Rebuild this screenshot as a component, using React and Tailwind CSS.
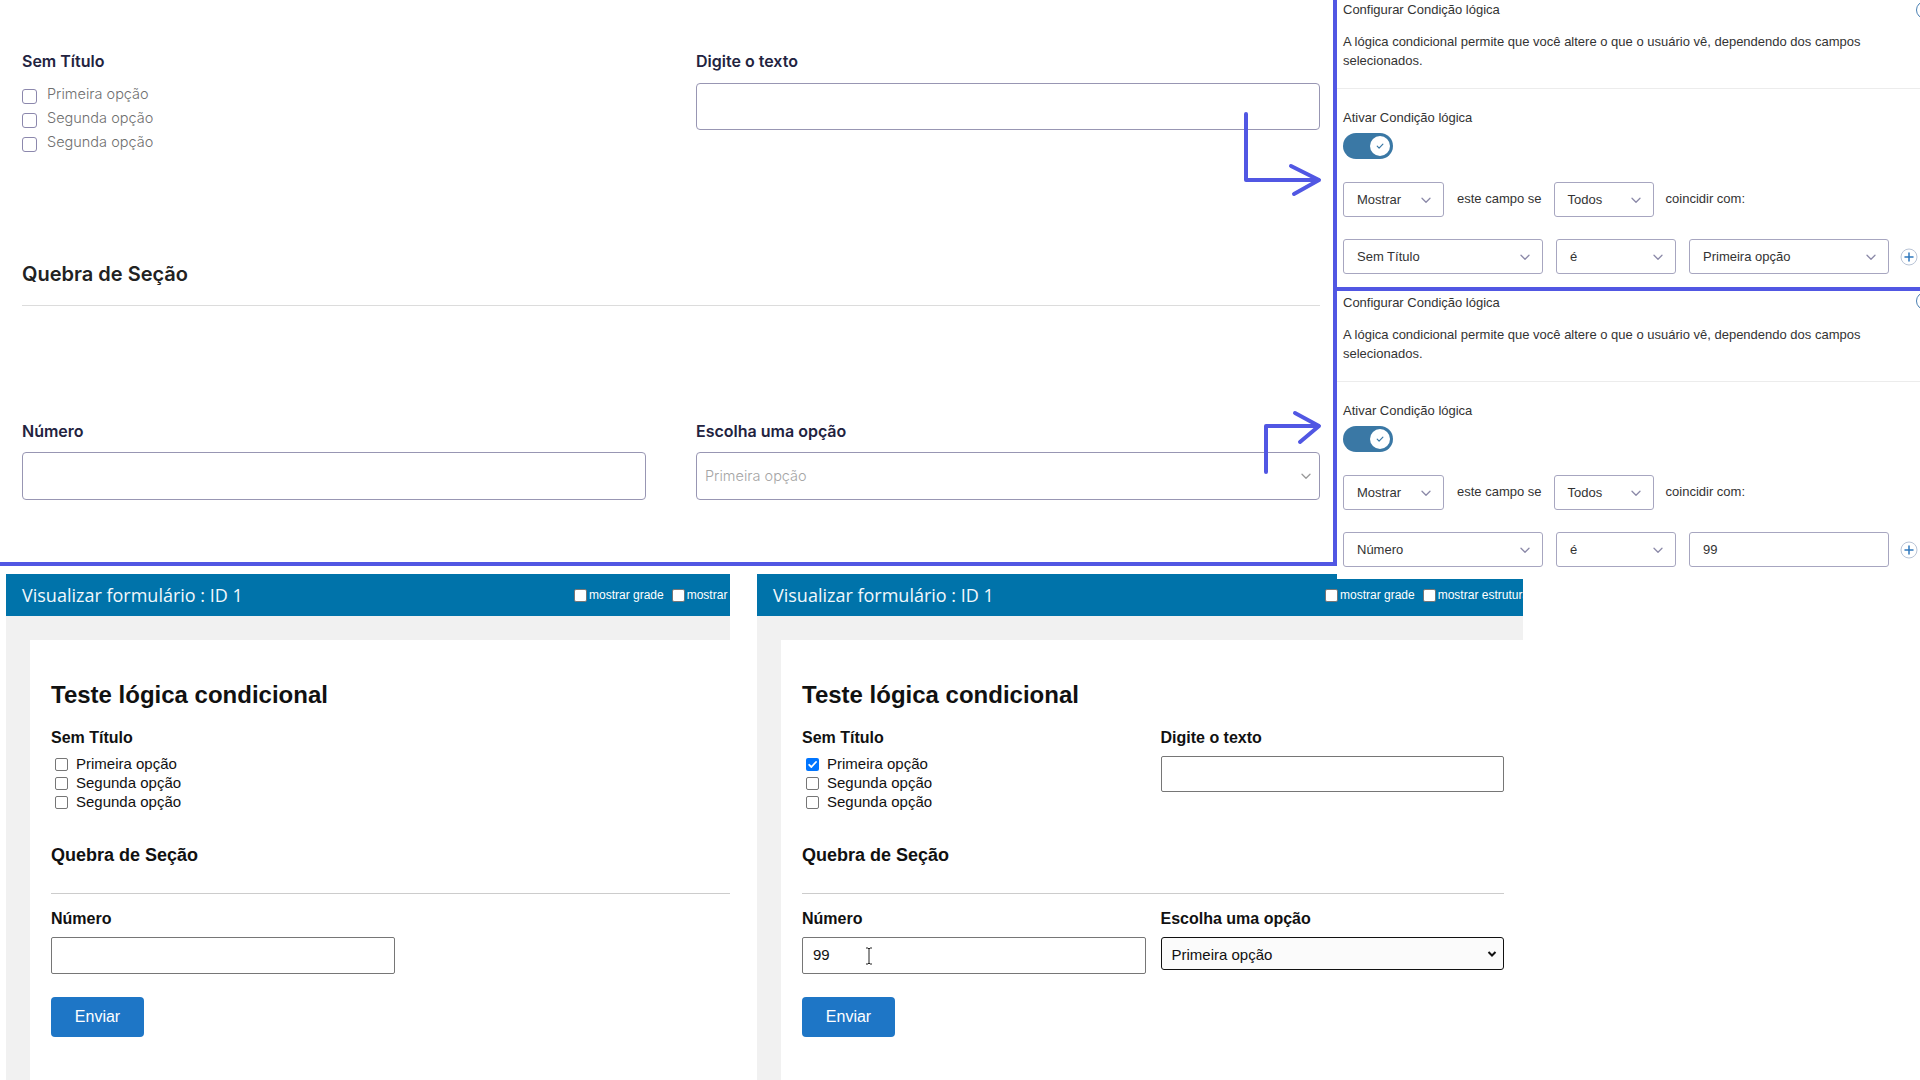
import React from 'react';

function Chevron({ className }) {
  return (
    <svg width="12" height="12" viewBox="0 0 12 12" className={className}>
      <path d="M2 4.2l4 4 4-4" fill="none" stroke="currentColor" strokeWidth="1.3" strokeLinecap="round" strokeLinejoin="round" />
    </svg>
  );
}

function PlusCircle() {
  return (
    <svg width="18" height="18" viewBox="0 0 18 18" className="shrink-0">
      <circle cx="9" cy="9" r="8" fill="none" stroke="#b9c4d6" strokeWidth="1" />
      <path d="M9 5v8M5 9h8" stroke="#2f78bd" strokeWidth="1.5" strokeLinecap="round" />
    </svg>
  );
}

function Box({ className, children, chevron = true }) {
  return (
    <div className={`flex h-[35px] shrink-0 items-center justify-between rounded-[3px] border border-[#a7a6c0] pl-[13px] pr-[11px] text-[13px] text-[#333] ${className}`}>
      <span>{children}</span>
      {chevron && <Chevron className="text-[#8b89a8]" />}
    </div>
  );
}

function LogicPanel({ field, value, valueIsInput, first }) {
  return (
    <div className={first ? 'relative h-[291px] border-b-4 border-[#5157e3] pt-[1px]' : 'relative pt-[3px]'}>
      <div className="absolute right-[-14px] top-[1px] h-[18px] w-[18px] rounded-full border-[1.5px] border-[#4a80b3]" />
      <div className="border-b border-[#ececec] pb-[18px] pl-[6px]">
        <div className="text-[13px] leading-[18px] text-[#333]">Configurar Condição lógica</div>
        <p className="mt-[13px] text-[13px] leading-[19px] text-[#333]">
          A lógica condicional permite que você altere o que o usuário vê, dependendo dos campos
          <br />
          selecionados.
        </p>
      </div>
      <div className="pl-[6px]">
        <div className="mt-[20px] text-[13px] leading-[18px] text-[#333]">Ativar Condição lógica</div>
        <div className="mt-[6px] flex h-[26px] w-[50px] items-center justify-end rounded-full bg-[#3a78a5] pr-[3px]">
          <div className="flex h-[20px] w-[20px] items-center justify-center rounded-full bg-white">
            <svg width="10" height="10" viewBox="0 0 10 10">
              <path d="M2.2 5.2l1.9 1.9 3.8-4" fill="none" stroke="#3a78a5" strokeWidth="1.2" strokeLinecap="round" strokeLinejoin="round" />
            </svg>
          </div>
        </div>
        <div className="mt-[23px] flex items-center text-[13px] text-[#333]">
          <Box className="w-[101px]">Mostrar</Box>
          <span className="ml-[13px] -mt-[2px]">este campo se</span>
          <Box className="ml-[12px] w-[100px]">Todos</Box>
          <span className="ml-[12px] -mt-[2px]">coincidir com:</span>
        </div>
        <div className="mt-[22px] flex items-center">
          <Box className="w-[200px]">{field}</Box>
          <Box className="ml-[13px] w-[120px]">é</Box>
          <Box className="ml-[13px] w-[200px]" chevron={!valueIsInput}>{value}</Box>
          <div className="ml-[11px]">
            <PlusCircle />
          </div>
        </div>
      </div>
    </div>
  );
}

function EditorLabel({ children }) {
  return <div className="text-[16px] font-semibold leading-[20px] text-[#23233f]">{children}</div>;
}

function Editor() {
  return (
    <div className="h-[566px] w-[1337px] shrink-0 border-b-4 border-r-4 border-[#5157e3] pl-[22px] pr-[13px] pt-[51px] font-['Inter',sans-serif]">
      <div className="grid grid-cols-2 gap-x-[50px]">
        <div>
          <EditorLabel>Sem Título</EditorLabel>
          <div className="mt-[11px]">
            {['Primeira opção', 'Segunda opção', 'Segunda opção'].map((o, i) => (
              <div key={i} className="flex h-[24px] items-center">
                <span className="mt-[4px] h-[15px] w-[15px] rounded-[3px] border border-[#8c88ad] bg-white" />
                <span className="ml-[10px] text-[14.5px] font-light text-[#6f6f6f]">{o}</span>
              </div>
            ))}
          </div>
        </div>
        <div>
          <EditorLabel>Digite o texto</EditorLabel>
          <div className="mt-[12px] h-[47px] rounded-[4px] border border-[#9896b3]" />
        </div>
      </div>
      <div className="mt-[106px] text-[20px] font-semibold leading-[28px] text-[#222]">Quebra de Seção</div>
      <div className="mt-[17px] h-px bg-[#dcdcdc]" />
      <div className="mt-[115px] grid grid-cols-2 gap-x-[50px]">
        <div>
          <EditorLabel>Número</EditorLabel>
          <div className="mt-[11px] h-[48px] rounded-[4px] border border-[#9896b3]" />
        </div>
        <div>
          <EditorLabel>Escolha uma opção</EditorLabel>
          <div className="mt-[11px] flex h-[48px] items-center justify-between rounded-[4px] border border-[#9896b3] pl-[8px] pr-[7px]">
            <span className="text-[14.5px] font-light text-[#a5a5a5]">Primeira opção</span>
            <Chevron className="text-[#999]" />
          </div>
        </div>
      </div>
    </div>
  );
}

function NativeCheck({ checked }) {
  if (checked) {
    return (
      <span className="ml-[4px] flex h-[13px] w-[13px] shrink-0 items-center justify-center rounded-[2px] bg-[#0075ff]">
        <svg width="11" height="11" viewBox="0 0 11 11">
          <path d="M2.2 5.8l2.2 2.2 4.6-5" fill="none" stroke="white" strokeWidth="1.8" strokeLinecap="round" strokeLinejoin="round" />
        </svg>
      </span>
    );
  }
  return <span className="ml-[4px] h-[13px] w-[13px] shrink-0 rounded-[2px] border border-[#767676] bg-white" />;
}

function Preview({ full }) {
  return (
    <div className="flex h-[506px] w-[766px] flex-col font-['Liberation_Sans',Arial,sans-serif]">
      <div className="flex h-[42px] shrink-0 items-center overflow-hidden whitespace-nowrap bg-[#0073aa]">
        <div className="w-[568px] shrink-0 pl-[16px] pt-[1px] font-['Open_Sans',sans-serif] text-[18px] text-[#f2f8fb]">Visualizar formulário : ID 1</div>
        <div className="flex items-center text-[12px] text-white">
          <span className="h-[13px] w-[13px] shrink-0 rounded-[2px] border border-[#767676] bg-white" />
          <span className="ml-[2px]">mostrar grade</span>
        </div>
        <div className="ml-[8px] flex items-center text-[12px] text-white">
          <span className="h-[13px] w-[13px] shrink-0 rounded-[2px] border border-[#767676] bg-white" />
          <span className="ml-[2px]">mostrar estrutura</span>
        </div>
      </div>
      <div className="flex-1 bg-[#f1f1f1] pl-[24px] pt-[24px]">
        <div className="h-full bg-white pl-[21px] pr-[19px] pt-[41px] text-[#111]">
          <h2 className="text-[24px] font-bold leading-[28px]">Teste lógica condicional</h2>
          <div className="mt-[19px] grid grid-cols-2 gap-x-[15px]">
            <div>
              <div className="text-[16px] font-bold leading-[20px]">Sem Título</div>
              <div className="mt-[7px]">
                {['Primeira opção', 'Segunda opção', 'Segunda opção'].map((o, i) => (
                  <div key={i} className="flex h-[19px] items-center text-[15px]">
                    <NativeCheck checked={full && i === 0} />
                    <span className="ml-[8px]">{o}</span>
                  </div>
                ))}
              </div>
            </div>
            {full && (
              <div>
                <div className="text-[16px] font-bold leading-[20px]">Digite o texto</div>
                <div className="mt-[8px] h-[36px] rounded-[2px] border border-[#767676]" />
              </div>
            )}
          </div>
          <div className="mt-[32px] text-[18px] font-bold leading-[22px]">Quebra de Seção</div>
          <div className="mt-[27px] h-px bg-[#cccccc]" />
          <div className="mt-[15px] grid grid-cols-2 gap-x-[15px]">
            <div>
              <div className="text-[16px] font-bold leading-[20px]">Número</div>
              <div className="relative mt-[8px] flex h-[37px] items-center rounded-[2px] border border-[#767676] pl-[10px] text-[15px]">
                {full && (
                  <>
                    <span>99</span>
                    <svg width="8" height="18" viewBox="0 0 8 18" className="absolute left-[62px] top-[9px]">
                      <path d="M1 1h2l1 1 1-1h2M4 2v14M1 17h2l1-1 1 1h2" fill="none" stroke="#222" strokeWidth="1" />
                    </svg>
                  </>
                )}
              </div>
            </div>
            {full && (
              <div>
                <div className="text-[16px] font-bold leading-[20px]">Escolha uma opção</div>
                <div className="mt-[8px] flex h-[33px] items-center justify-between rounded-[3px] border border-[#111] bg-[#fbfbfb] pl-[10px] pr-[6px] pt-[3px] text-[15px]">
                  <span>Primeira opção</span>
                  <svg width="10" height="10" viewBox="0 0 10 10" className="-mt-[3px]">
                    <path d="M1.5 3l3.5 3.5L8.5 3" fill="none" stroke="#111" strokeWidth="2" />
                  </svg>
                </div>
              </div>
            )}
          </div>
          <button className="mt-[23px] h-[40px] w-[93px] rounded-[4px] bg-[#1e76c6] text-[16px] text-white">Enviar</button>
        </div>
      </div>
    </div>
  );
}

export default function App() {
  return (
    <div className="relative h-[1080px] w-[1920px] overflow-hidden bg-white">
      <div className="relative flex h-[574px] items-start">
        <Editor />
        <div className="relative z-10 h-[579px] w-[583px] shrink-0 bg-white font-['Liberation_Sans',Arial,sans-serif]">
          <LogicPanel first field="Sem Título" value="Primeira opção" />
          <LogicPanel field="Número" value="99" valueIsInput />
        </div>
        {/* annotation arrows */}
        <svg width="1337" height="566" className="pointer-events-none absolute left-0 top-0">
          <g fill="none" stroke="#5157e3" strokeWidth="4" strokeLinecap="round" strokeLinejoin="round">
            <path d="M1246 114V180H1318" />
            <path d="M1291 166L1319 180L1294 194" />
            <path d="M1266 472V426H1318" />
            <path d="M1295 413L1319 426L1300 442" />
          </g>
        </svg>
      </div>
      <div className="flex items-start">
        <div className="ml-[6px] w-[724px] shrink-0 overflow-hidden">
          <Preview />
        </div>
        <div className="ml-[27px] w-[766px] shrink-0">
          <Preview full />
        </div>
      </div>
    </div>
  );
}
